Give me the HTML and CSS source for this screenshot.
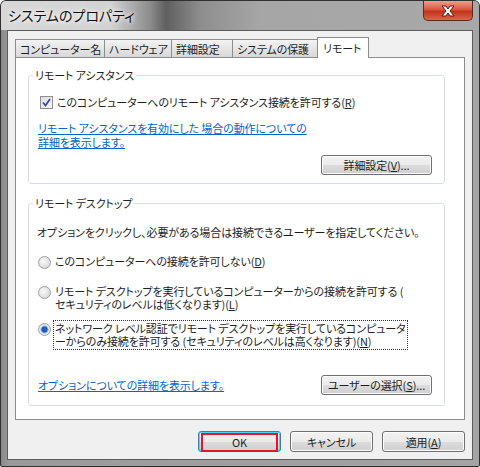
FILE: index.html
```html
<!DOCTYPE html>
<html lang="ja">
<head>
  <meta charset="UTF-8" />
  <title>システムのプロパティ</title>
  <link rel="stylesheet" href="styles.css">
</head>
<body>
  <div class="window">
    <div class="titlebar">
      <span class="title">システムのプロパティ</span>
      <div class="close">
        <svg width="20" height="12" viewBox="0 0 20 12">
          <path d="M4 1 L8 1 L10 4 L12 1 L16 1 L12 6 L16 11 L12 11 L10 8 L8 11 L4 11 L8 6 Z" fill="#fff" stroke="#5a1a10" stroke-width="1"/>
        </svg>
      </div>
    </div>

    <div class="client">
      <div class="tabs">
        <div class="tab t1">コンピューター名</div>
        <div class="tab t2">ハードウェア</div>
        <div class="tab t3">詳細設定</div>
        <div class="tab t4">システムの保護</div>
        <div class="tab t5 active">リモート</div>
      </div>

      <div class="panel">
        <fieldset class="group assist">
          <legend>リモート アシスタンス</legend>
          <div class="check-row">
            <span class="checkbox">
              <svg width="11" height="11" viewBox="0 0 11 11"><path d="M2 5.5 L4.5 8.5 L9 2" fill="none" stroke="#3a4fa0" stroke-width="1.8"/></svg>
            </span>
            <span>このコンピューターへのリモート アシスタンス接続を許可する(<u>R</u>)</span>
          </div>
          <a class="link assist-link" href="#">リモート アシスタンスを有効にした 場合の動作についての<br>詳細を表示します。</a>
          <div class="btn-row">
            <button class="btn wide">詳細設定(<u>V</u>)...</button>
          </div>
        </fieldset>

        <fieldset class="group desktop">
          <legend>リモート デスクトップ</legend>
          <p class="intro">オプションをクリックし、必要がある場合は接続できるユーザーを指定してください。</p>
          <div class="radio-row r1">
            <span class="radio"></span>
            <span>このコンピューターへの接続を許可しない(<u>D</u>)</span>
          </div>
          <div class="radio-row r2">
            <span class="radio"></span>
            <span>リモート デスクトップを実行しているコンピューターからの接続を許可する (<br>セキュリティのレベルは低くなります)(<u>L</u>)</span>
          </div>
          <div class="radio-row r3">
            <span class="radio checked"></span>
            <span class="focus">ネットワーク レベル認証でリモート デスクトップを実行しているコンピュータ<br>ーからのみ接続を許可する (セキュリティのレベルは高くなります)(<u>N</u>)</span>
          </div>
          <div class="bottom-row">
            <a class="link" href="#">オプションについての詳細を表示します。</a>
            <button class="btn wide">ユーザーの選択(<u>S</u>)...</button>
          </div>
        </fieldset>
      </div>

      <div class="dialog-buttons">
        <button class="btn default"><span class="mark">OK</span></button>
        <button class="btn">キャンセル</button>
        <button class="btn">適用(<u>A</u>)</button>
      </div>
    </div>
  </div>
</body>
</html>
```

FILE: styles.css
```css
body {
  margin: 0;
  background: #fff;
  font-family: "Noto Sans CJK JP", "Noto Sans", sans-serif;
  font-size: 11px;
  letter-spacing: -0.1px;
  font-feature-settings: "palt";
  color: #1e1e1e;
  white-space: nowrap;
}
.window {
  width: 478px;
  height: 465px;
  border: 1px solid #303030;
  border-radius: 6px 6px 2px 2px;
  background: linear-gradient(to right, #8a8a8a 0, #9a9a9a 8px, #a4a4a4 100%);
  display: flex;
  flex-direction: column;
  overflow: hidden;
}
.titlebar {
  height: 29px;
  display: flex;
  justify-content: space-between;
  background: linear-gradient(to right, #d8d8d8 0, #d2d2d2 110px, #8a8a8a 150px, #5f5f5f 165px, #8e8e8e 200px, #a6a6a6 260px, #a8a8a8 100%);
}
.title {
  padding: 5px 0 0 7px;
  font-size: 14px;
  letter-spacing: 0;
  line-height: 18px;
  color: #111;
  text-shadow: 0 0 6px #fff, 0 0 4px #fff;
}
.close {
  width: 48px;
  height: 19px;
  margin-right: 6px;
  border: 1px solid #5a2a20;
  border-top: none;
  border-radius: 0 0 5px 5px;
  background: linear-gradient(#e9a28e 0, #d8573c 45%, #c3331b 55%, #d46a48 100%);
  display: flex;
  align-items: center;
  justify-content: center;
}
.client {
  margin: 0 6px;
  height: 428px;
  background: #f0f0f0;
  border: 1px solid #5c5c5c;
  padding: 0 7px;
  display: flex;
  flex-direction: column;
}
.tabs {
  display: flex;
  height: 26px;
  align-items: flex-end;
  position: relative;
  z-index: 1;
}
.tab {
  box-sizing: border-box;
  height: 18px;
  line-height: 18px;
  border: 1px solid #8d8d8d;
  border-bottom: none;
  margin-right: -1px;
  padding: 0 4px;
  background: linear-gradient(#f3f3f3, #e5e5e5 50%, #d9d9d9);
}
.t1 { width: 90px; }
.t2 { width: 68px; }
.t3 { width: 62px; }
.t4 { width: 86px; }
.tab.active {
  width: 52px;
  height: 21px;
  line-height: 20px;
  background: #fff;
  margin-bottom: -1px;
  padding: 0 5px;
}
.panel {
  height: 351px;
  background: #fff;
  border: 1px solid #8d8d8d;
  padding: 10px 19px 0 12px;
}
.group {
  margin: 0;
  border: 1px solid #d5dfe5;
  border-radius: 3px;
  padding: 0 12px 0 8px;
}
.group legend {
  padding: 0 2px;
  margin-left: -4px;
  line-height: 14px;
  color: #1e1e1e;
}
.check-row {
  margin-top: 13px;
  display: flex;
  align-items: center;
  height: 14px;
  line-height: 14px;
}
.checkbox {
  width: 11px;
  height: 11px;
  margin: 0 4px 0 3px;
  border: 1px solid #8f8f8f;
  background: linear-gradient(135deg, #dcdcdc, #f8f8f8);
  display: flex;
}
.link {
  color: #0066cc;
  text-decoration: underline;
  line-height: 14px;
}
.assist-link {
  display: block;
  margin: 12px 0 0 1px;
}
.btn-row {
  display: flex;
  justify-content: flex-end;
  margin: 6px 0 8px;
}
.btn {
  height: 20px;
  width: 83px;
  padding: 0;
  font: inherit;
  letter-spacing: inherit;
  color: #1e1e1e;
  border: 1px solid #707070;
  border-radius: 3px;
  background: linear-gradient(#f2f2f2 0, #ebebeb 50%, #dddddd 51%, #cfcfcf 100%);
  box-shadow: inset 0 0 0 1px #fcfcfc;
}
.btn.wide {
  width: 111px;
}
.desktop {
  margin-top: 12px;
  padding-bottom: 10px;
}
.intro {
  margin: 15px 0 0;
  line-height: 14px;
}
.radio-row {
  display: flex;
  align-items: flex-start;
  line-height: 13px;
  padding-left: 1px;
}
.r1 { margin-top: 16px; }
.r2 { margin-top: 16px; }
.r3 { margin-top: 11px; }
.radio {
  flex: none;
  width: 11px;
  height: 11px;
  margin: 1px 4px 0 0;
  border: 1px solid #a0a0a0;
  border-radius: 50%;
  background: radial-gradient(circle at 40% 40%, #fafafa, #d0d0d0);
}
.radio.checked {
  background: radial-gradient(circle, #1f6fc8 0, #1a55a8 2.5px, #8fb8e6 3.5px, #e6eef8 4.5px, #d8d8d8 100%);
}
.focus {
  outline: 1px dotted #333;
  outline-offset: 1px;
}
.bottom-row {
  margin-top: 27px;
  display: flex;
  justify-content: space-between;
  align-items: center;
  padding-left: 1px;
}
.dialog-buttons {
  display: flex;
  justify-content: flex-end;
  gap: 9px;
  margin-top: 11px;
}
.dialog-buttons .btn {
  width: 83px;
  height: 21px;
}
.btn.default {
  border-color: #3c7fb1;
  box-shadow: inset 0 0 0 1px #48d8fb;
  padding: 1px 2px;
}
.mark {
  display: block;
  height: 15px;
  line-height: 15px;
  border: 2px solid #e0182a;
}
```
